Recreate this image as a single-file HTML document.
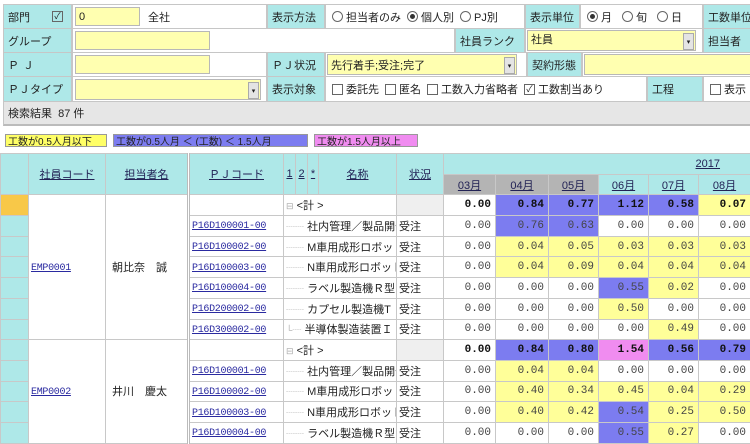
<!DOCTYPE html>
<html><head><meta charset="utf-8"><style>
*{box-sizing:border-box;margin:0;padding:0}
body{width:750px;height:439px;overflow:hidden;background:#fff;font-family:"Liberation Sans","Noto Sans CJK JP",sans-serif;font-size:11px;color:#222;position:relative}
.a{position:absolute;display:flex;align-items:center;white-space:nowrap;overflow:hidden}
.c{background:#aee8e8;border:1px solid #c6c6c6;padding-left:4px}
.y{background:#ffffb0;border:1px solid #b8b8b8;padding-left:3px}
.w{background:#fff;border:1px solid #c6c6c6;padding-left:4px}
.arr{position:absolute;right:1px;top:2px;width:11px;height:17px;background:#e4e4e4;border:1px solid #aaa;font-size:7px;display:flex;align-items:center;justify-content:center}
.rb{display:inline-block;width:11px;height:11px;border:1px solid #666;border-radius:50%;margin:0 3px 0 6px;vertical-align:middle;position:relative}
.rb.on::after{content:"";position:absolute;left:2px;top:2px;width:5px;height:5px;border-radius:50%;background:#333}
.cb{display:inline-block;width:11px;height:11px;border:1px solid #666;margin:0 3px 0 6px;vertical-align:middle;font-size:9px;line-height:9px;text-align:center}
table{position:absolute;left:0;top:153px;border-collapse:collapse;table-layout:fixed;width:750px}
td{border:1px solid #c8c8c8;height:20.7px;white-space:nowrap;overflow:hidden;padding:0 2px}
.h{background:#aee8e8;text-align:center;color:#333}
.h u{color:#225}
.g{background:#b4b4b4}
.lc{background:#aee8e8}
.or{background:#f8c848}
a{color:#2a2aa0;font-size:10px;font-family:"Liberation Mono",monospace;letter-spacing:-.3px;text-decoration:underline}
.n{text-align:right;font-family:"Liberation Mono",monospace;font-size:11px;padding-right:4px;color:#444}
.b{font-weight:bold;color:#111}
.B{background:#7c7cf0}.Y{background:#ffff99}.P{background:#f08cf0}
.st{background:#efefef}
.tr{color:#aaa;font-size:9px}
</style></head><body>
<div class="a c" style="left:3px;top:4px;width:69px;height:25px">部門<span class="cb" style="margin-left:22px">✓</span></div>
<div class="a w" style="left:72px;top:4px;width:195px;height:25px"></div>
<div class="a y" style="left:75px;top:7px;width:65px;height:19px">0</div>
<div class="a" style="left:148px;top:4px;height:25px">全社</div>
<div class="a c" style="left:267px;top:4px;width:58px;height:25px">表示方法</div>
<div class="a w" style="left:325px;top:4px;width:200px;height:25px;padding-left:0"><span class="rb"></span>担当者のみ<span class="rb on"></span>個人別<span class="rb"></span>PJ別</div>
<div class="a c" style="left:525px;top:4px;width:55px;height:25px">表示単位</div>
<div class="a w" style="left:580px;top:4px;width:123px;height:25px;padding-left:0"><span class="rb on"></span>月<span class="rb" style="margin-left:10px"></span>旬<span class="rb" style="margin-left:10px"></span>日</div>
<div class="a c" style="left:703px;top:4px;width:50px;height:25px">工数単位</div>
<div class="a c" style="left:3px;top:28px;width:69px;height:25px">グループ</div>
<div class="a w" style="left:72px;top:28px;width:383px;height:25px"></div>
<div class="a y" style="left:75px;top:31px;width:135px;height:19px"></div>
<div class="a c" style="left:455px;top:28px;width:70px;height:25px">社員ランク</div>
<div class="a w" style="left:525px;top:28px;width:178px;height:25px"></div>
<div class="a y" style="left:527px;top:30px;width:169px;height:21px;align-items:flex-start">社員<span class="arr">▾</span></div>
<div class="a c" style="left:703px;top:28px;width:50px;height:25px">担当者</div>
<div class="a c" style="left:3px;top:52px;width:69px;height:25px;letter-spacing:4px">ＰＪ</div>
<div class="a w" style="left:72px;top:52px;width:195px;height:25px"></div>
<div class="a y" style="left:75px;top:55px;width:135px;height:19px"></div>
<div class="a c" style="left:267px;top:52px;width:58px;height:25px">ＰＪ状況</div>
<div class="a w" style="left:325px;top:52px;width:202px;height:25px"></div>
<div class="a y" style="left:327px;top:54px;width:190px;height:21px">先行着手;受注;完了<span class="arr">▾</span></div>
<div class="a c" style="left:527px;top:52px;width:55px;height:25px">契約形態</div>
<div class="a w" style="left:582px;top:52px;width:170px;height:25px"></div>
<div class="a y" style="left:584px;top:54px;width:170px;height:21px"></div>
<div class="a c" style="left:3px;top:76px;width:69px;height:26px">ＰＪタイプ</div>
<div class="a w" style="left:72px;top:76px;width:195px;height:26px"></div>
<div class="a y" style="left:75px;top:79px;width:186px;height:21px"><span class="arr">▾</span></div>
<div class="a c" style="left:267px;top:76px;width:58px;height:26px">表示対象</div>
<div class="a w" style="left:325px;top:76px;width:322px;height:26px;padding-left:0"><span class="cb"></span>委託先<span class="cb"></span>匿名<span class="cb"></span>工数入力省略者<span class="cb">✓</span>工数割当あり</div>
<div class="a c" style="left:647px;top:76px;width:56px;height:26px">工程</div>
<div class="a w" style="left:703px;top:76px;width:50px;height:26px;padding-left:0"><span class="cb"></span>表示</div>
<div class="a" style="left:3px;top:101px;width:750px;height:25px;background:#e6e6e6;border:1px solid #c6c6c6;border-bottom:2px solid #bbb;padding-left:4px">検索結果&nbsp;&nbsp;87 件</div>
<div class="a" style="left:5px;top:134px;width:102px;height:13px;background:#ffff66;border:1px solid #999;font-size:10px;padding-left:2px">工数が0.5人月以下</div>
<div class="a" style="left:113px;top:134px;width:195px;height:13px;background:#7c7cf0;border:1px solid #999;font-size:10px;padding-left:2px">工数が0.5人月 ＜ (工数) ＜ 1.5人月</div>
<div class="a" style="left:314px;top:134px;width:104px;height:13px;background:#f08cf0;border:1px solid #999;font-size:10px;padding-left:2px">工数が1.5人月以上</div>

<table>
<colgroup><col style="width:28px"><col style="width:77px"><col style="width:83px"><col style="width:95px"><col style="width:12px"><col style="width:12px"><col style="width:11px"><col style="width:78px"><col style="width:47px"><col style="width:52px"><col style="width:53px"><col style="width:50px"><col style="width:50px"><col style="width:50px"><col style="width:52px"></colgroup>
<tr><td class="h" rowspan="2"></td><td class="h" rowspan="2"><u>社員コード</u></td><td class="h" rowspan="2"><u>担当者名</u></td><td class="h" rowspan="2" style="border-left:3px double #bbb"><u>ＰＪコード</u></td><td class="h" rowspan="2" style="padding:0"><u>1</u></td><td class="h" rowspan="2" style="padding:0"><u>2</u></td><td class="h" rowspan="2" style="padding:0"><u>*</u></td><td class="h" rowspan="2"><u>名称</u></td><td class="h" rowspan="2"><u>状況</u></td><td class="h" colspan="6" style="text-align:right;padding-right:30px"><u>2017</u></td></tr>
<tr><td class="h g"><u>03月</u></td><td class="h g"><u>04月</u></td><td class="h g"><u>05月</u></td><td class="h"><u>06月</u></td><td class="h"><u>07月</u></td><td class="h"><u>08月</u></td></tr>

<tr><td class="or"></td><td rowspan="7"><a>EMP0001</a></td><td rowspan="7" style="padding-left:6px">朝比奈　誠</td><td style="border-left:3px double #bbb"></td><td colspan="4"><span class="tr">⊟</span> &lt;計 &gt;</td><td class="st"></td><td class="n b">0.00</td><td class="n b B">0.84</td><td class="n b B">0.77</td><td class="n b B">1.12</td><td class="n b B">0.58</td><td class="n b Y">0.07</td></tr>
<tr><td class="lc"></td><td style="border-left:3px double #bbb"><a>P16D100001-00</a></td><td colspan="4"><span class="tr">┈┈</span> 社内管理／製品開発</td><td>受注</td><td class="n">0.00</td><td class="n B">0.76</td><td class="n B">0.63</td><td class="n">0.00</td><td class="n">0.00</td><td class="n">0.00</td></tr>
<tr><td class="lc"></td><td style="border-left:3px double #bbb"><a>P16D100002-00</a></td><td colspan="4"><span class="tr">┈┈</span> M車用成形ロボット</td><td>受注</td><td class="n">0.00</td><td class="n Y">0.04</td><td class="n Y">0.05</td><td class="n Y">0.03</td><td class="n Y">0.03</td><td class="n Y">0.03</td></tr>
<tr><td class="lc"></td><td style="border-left:3px double #bbb"><a>P16D100003-00</a></td><td colspan="4"><span class="tr">┈┈</span> N車用成形ロボット</td><td>受注</td><td class="n">0.00</td><td class="n Y">0.04</td><td class="n Y">0.09</td><td class="n Y">0.04</td><td class="n Y">0.04</td><td class="n Y">0.04</td></tr>
<tr><td class="lc"></td><td style="border-left:3px double #bbb"><a>P16D100004-00</a></td><td colspan="4"><span class="tr">┈┈</span> ラベル製造機Ｒ型</td><td>受注</td><td class="n">0.00</td><td class="n">0.00</td><td class="n">0.00</td><td class="n B">0.55</td><td class="n Y">0.02</td><td class="n">0.00</td></tr>
<tr><td class="lc"></td><td style="border-left:3px double #bbb"><a>P16D200002-00</a></td><td colspan="4"><span class="tr">┈┈</span> カプセル製造機T</td><td>受注</td><td class="n">0.00</td><td class="n">0.00</td><td class="n">0.00</td><td class="n Y">0.50</td><td class="n">0.00</td><td class="n">0.00</td></tr>
<tr><td class="lc"></td><td style="border-left:3px double #bbb"><a>P16D300002-00</a></td><td colspan="4"><span class="tr">└┈</span> 半導体製造装置Ｉ</td><td>受注</td><td class="n">0.00</td><td class="n">0.00</td><td class="n">0.00</td><td class="n">0.00</td><td class="n Y">0.49</td><td class="n">0.00</td></tr>

<tr><td class="lc"></td><td rowspan="5"><a>EMP0002</a></td><td rowspan="5" style="padding-left:6px">井川　慶太</td><td style="border-left:3px double #bbb"></td><td colspan="4"><span class="tr">⊟</span> &lt;計 &gt;</td><td class="st"></td><td class="n b">0.00</td><td class="n b B">0.84</td><td class="n b B">0.80</td><td class="n b P">1.54</td><td class="n b B">0.56</td><td class="n b B">0.79</td></tr>
<tr><td class="lc"></td><td style="border-left:3px double #bbb"><a>P16D100001-00</a></td><td colspan="4"><span class="tr">┈┈</span> 社内管理／製品開発</td><td>受注</td><td class="n">0.00</td><td class="n Y">0.04</td><td class="n Y">0.04</td><td class="n">0.00</td><td class="n">0.00</td><td class="n">0.00</td></tr>
<tr><td class="lc"></td><td style="border-left:3px double #bbb"><a>P16D100002-00</a></td><td colspan="4"><span class="tr">┈┈</span> M車用成形ロボット</td><td>受注</td><td class="n">0.00</td><td class="n Y">0.40</td><td class="n Y">0.34</td><td class="n Y">0.45</td><td class="n Y">0.04</td><td class="n Y">0.29</td></tr>
<tr><td class="lc"></td><td style="border-left:3px double #bbb"><a>P16D100003-00</a></td><td colspan="4"><span class="tr">┈┈</span> N車用成形ロボット</td><td>受注</td><td class="n">0.00</td><td class="n Y">0.40</td><td class="n Y">0.42</td><td class="n B">0.54</td><td class="n Y">0.25</td><td class="n Y">0.50</td></tr>
<tr><td class="lc"></td><td style="border-left:3px double #bbb"><a>P16D100004-00</a></td><td colspan="4"><span class="tr">┈┈</span> ラベル製造機Ｒ型</td><td>受注</td><td class="n">0.00</td><td class="n">0.00</td><td class="n">0.00</td><td class="n B">0.55</td><td class="n Y">0.27</td><td class="n">0.00</td></tr>
</table>
</body></html>
